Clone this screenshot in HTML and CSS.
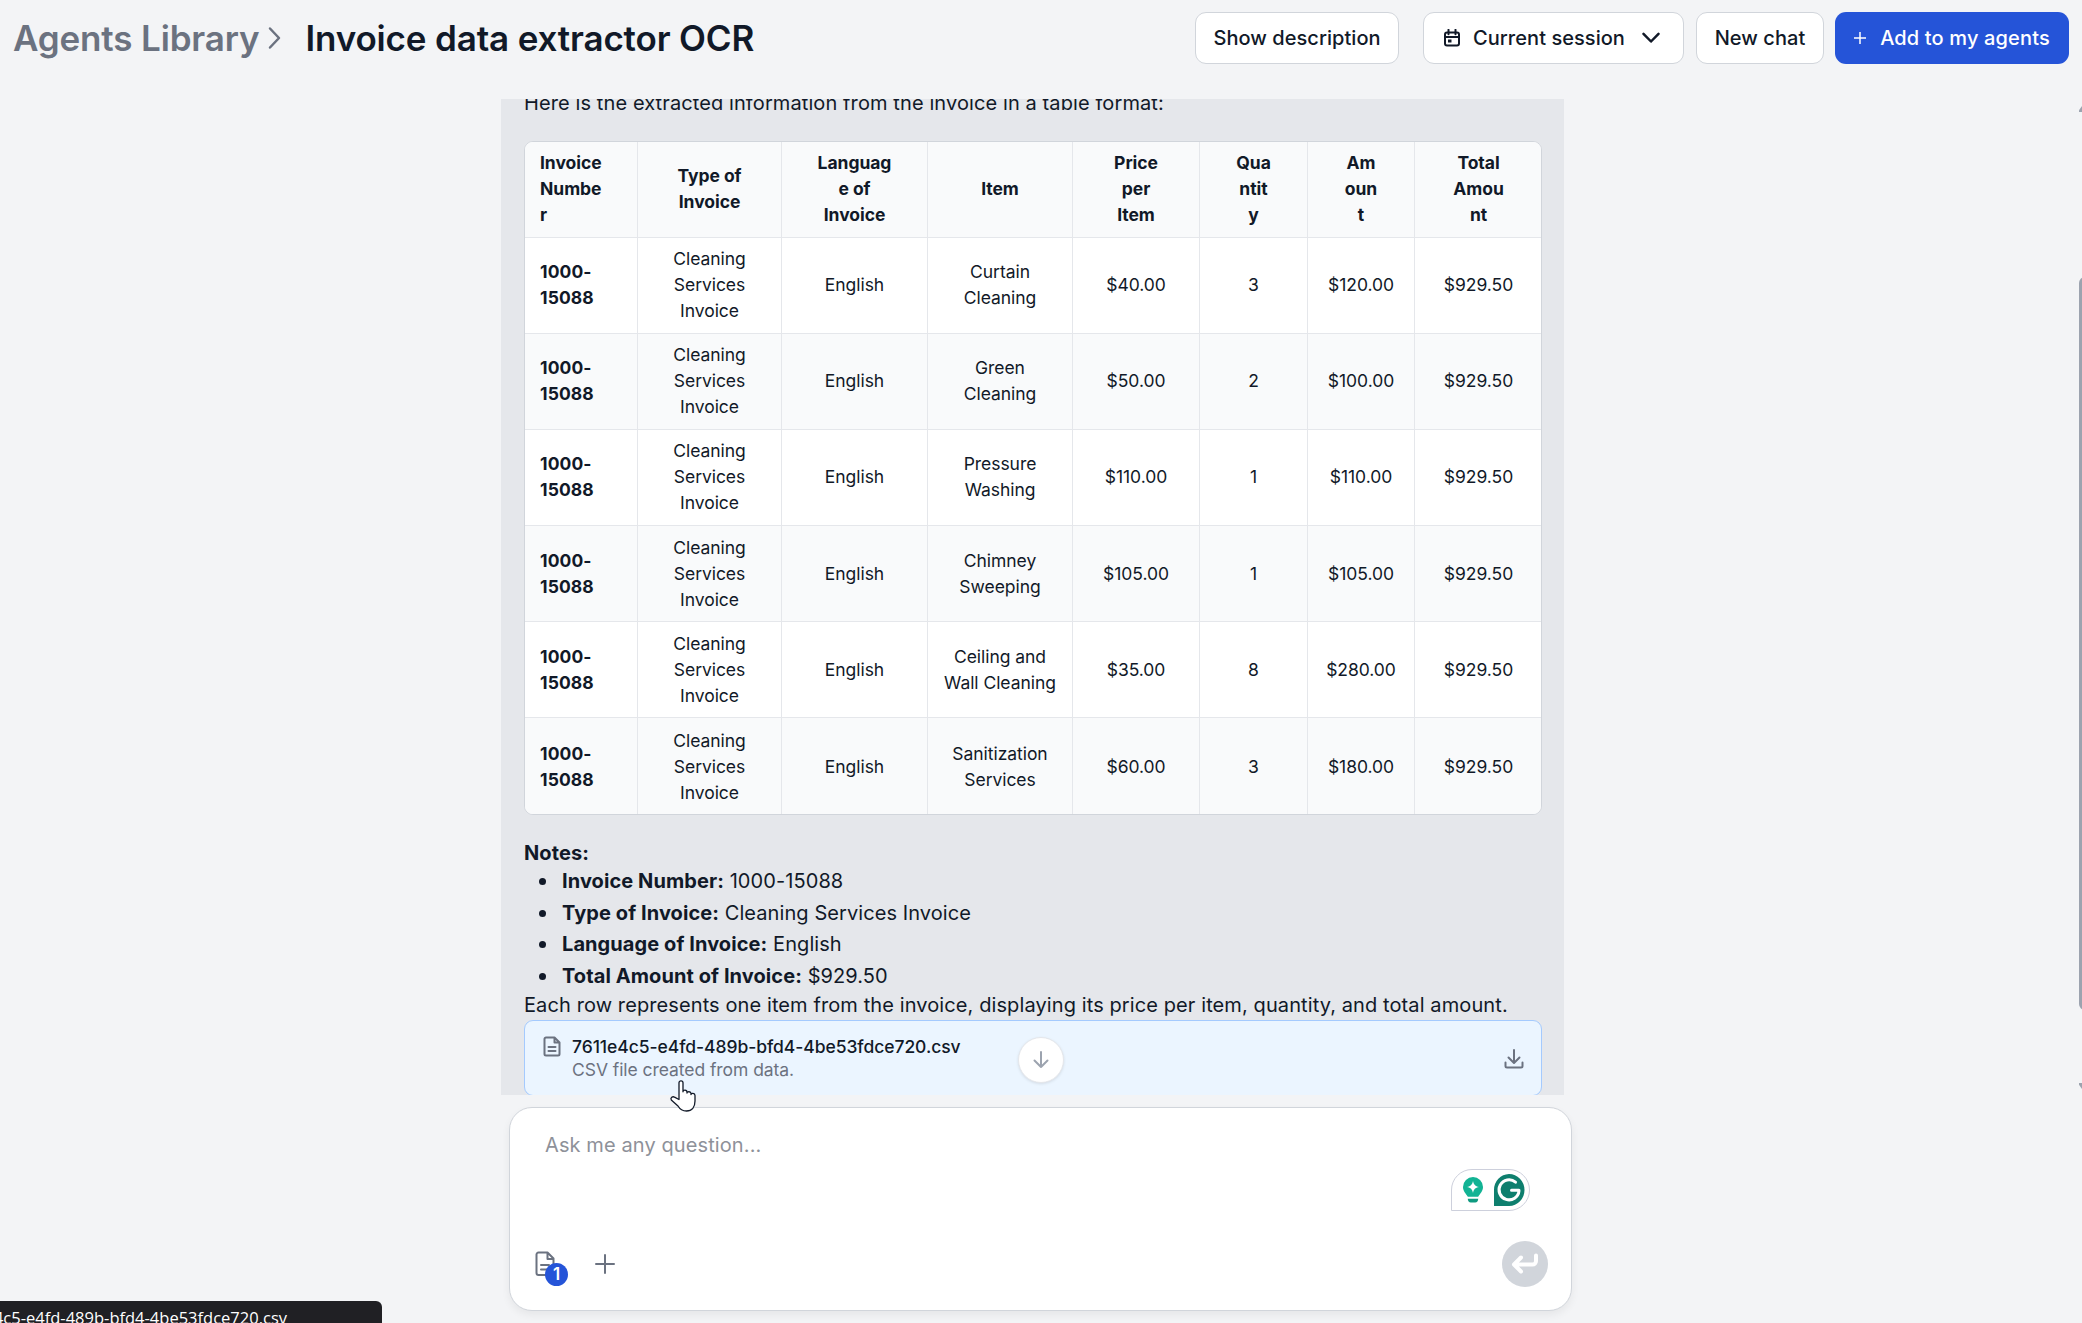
FILE: index.html
```
<html>
<head>
  <meta charset="utf-8">
  <title>Invoice data extractor OCR</title>
  <link rel="stylesheet" href="styles.css">
</head>
<body>
  <header class="topbar">
    <div class="crumbs">
      <a class="crumb-parent">Agents Library</a>
      <svg class="crumb-arrow" width="14" height="24" viewBox="0 0 14 24"><path d="M2 2.500l9 9.500L2 21.500"/></svg>
      <h1>Invoice data extractor OCR</h1>
    </div>
    <button class="btn btn-desc">Show description</button>
    <button class="btn btn-session">
      <svg width="18" height="18" viewBox="0 0 18 18"><rect x="2" y="3.500" width="14" height="13" rx="2"/><path d="M5.500 .8v4.400M12.500 .8v4.400M2 8h14"/><path class="solid" d="M5 10.500h3.500v3H5z"/></svg>
      <span>Current session</span>
      <svg width="18" height="18" viewBox="0 0 18 18"><path class="thick" d="M1.500 4.800L9 12.500l7.500-7.700"/></svg>
    </button>
    <button class="btn btn-new">New chat</button>
    <button class="btn btn-add">
      <svg width="12" height="12" viewBox="0 0 12 12"><path d="M6 0v12M0 6h12"/></svg>
      <span>Add to my agents</span>
    </button>
  </header>

  <main class="chat">
    <div class="message">
      <p>Here is the extracted information from the invoice in a table format:</p>
      <div class="table-wrap">
      <table>
        <colgroup>
          <col class="c-num"><col class="c-type"><col class="c-lang"><col class="c-item">
          <col class="c-price"><col class="c-qty"><col class="c-amount"><col class="c-total">
        </colgroup>
        <tr>
          <th>Invoice<br>Numbe<br>r</th><th>Type of<br>Invoice</th><th>Languag<br>e of<br>Invoice</th><th>Item</th>
          <th>Price<br>per<br>Item</th><th>Qua<br>ntit<br>y</th><th>Am<br>oun<br>t</th><th>Total<br>Amou<br>nt</th>
        </tr>
        <tr><td>1000-<br>15088</td><td>Cleaning<br>Services<br>Invoice</td><td>English</td><td>Curtain<br>Cleaning</td><td>$40.00</td><td>3</td><td>$120.00</td><td>$929.50</td></tr>
        <tr><td>1000-<br>15088</td><td>Cleaning<br>Services<br>Invoice</td><td>English</td><td>Green<br>Cleaning</td><td>$50.00</td><td>2</td><td>$100.00</td><td>$929.50</td></tr>
        <tr><td>1000-<br>15088</td><td>Cleaning<br>Services<br>Invoice</td><td>English</td><td>Pressure<br>Washing</td><td>$110.00</td><td>1</td><td>$110.00</td><td>$929.50</td></tr>
        <tr><td>1000-<br>15088</td><td>Cleaning<br>Services<br>Invoice</td><td>English</td><td>Chimney<br>Sweeping</td><td>$105.00</td><td>1</td><td>$105.00</td><td>$929.50</td></tr>
        <tr><td>1000-<br>15088</td><td>Cleaning<br>Services<br>Invoice</td><td>English</td><td>Ceiling and<br>Wall Cleaning</td><td>$35.00</td><td>8</td><td>$280.00</td><td>$929.50</td></tr>
        <tr><td>1000-<br>15088</td><td>Cleaning<br>Services<br>Invoice</td><td>English</td><td>Sanitization<br>Services</td><td>$60.00</td><td>3</td><td>$180.00</td><td>$929.50</td></tr>
      </table>
      </div>
      <p><b>Notes:</b></p>
      <ul>
        <li><b>Invoice Number:</b> 1000-15088</li>
        <li><b>Type of Invoice:</b> Cleaning Services Invoice</li>
        <li><b>Language of Invoice:</b> English</li>
        <li><b>Total Amount of Invoice:</b> $929.50</li>
      </ul>
      <p>Each row represents one item from the invoice, displaying its price per item, quantity, and total amount.</p>
      <div class="file">
        <svg class="file-icon" width="18" height="21" viewBox="0 0 18 21"><path d="M3 1.500h8.500l5 5V18a1.500 1.500 0 0 1-1.500 1.500H3A1.500 1.500 0 0 1 1.500 18V3A1.500 1.500 0 0 1 3 1.500zM11.500 1.500v5h5M5.500 11h7M5.500 15h7"/></svg>
        <div class="file-text">
          <div class="file-name">7611e4c5-e4fd-489b-bfd4-4be53fdce720.csv</div>
          <div class="file-sub">CSV file created from data.</div>
        </div>
        <svg class="file-download" width="20" height="20" viewBox="0 0 20 20"><path d="M10 1v12.500M4.500 8.500L10 14l5.500-5.500M1.500 13.500v3.500a1.500 1.500 0 0 0 1.500 1.500h14a1.500 1.500 0 0 0 1.500-1.500v-3.500"/></svg>
      </div>
    </div>
    <div class="scroll-down">
      <svg width="20" height="20" viewBox="0 0 20 20"><path d="M10 2v15M3.500 10.500L10 17l6.500-6.500"/></svg>
    </div>
  </main>

  <section class="composer">
    <div class="placeholder">Ask me any question...</div>
    <!-- grammarly -->
    <div class="assistant">
      <svg width="22" height="28" viewBox="0 0 22 28">
        <path fill="#12b394" d="M11 1a10 10 0 0 0-10 10c0 4.200 2.800 6.500 4.800 9.800h10.400c2-3.300 4.800-5.600 4.800-9.800A10 10 0 0 0 11 1z"/>
        <path fill="#fff" d="M11 5c.8 3.800 2.200 5.200 6 6-3.800.8-5.200 2.200-6 6-.8-3.800-2.200-5.200-6-6 3.800-.8 5.200-2.200 6-6z"/>
        <path fill="#0f9a80" d="M5.800 22.800h10.400c0 2.400-1.200 3.700-3 3.700H8.800c-1.800 0-3-1.300-3-3.700z"/>
      </svg>
      <svg width="32" height="32" viewBox="0 0 32 32">
        <path fill="#0e7f6e" d="M16 0a15.500 16 0 1 1 0 32H1V16A15.500 16 0 0 1 16 0z"/>
        <path class="ring" d="M22.500 8.200a10 10 0 1 0 3.500 8.600M26 16.300h-7.500"/>
      </svg>
    </div>
    <div class="composer-tools">
      <div class="attach">
        <svg width="22" height="26" viewBox="0 0 22 26"><path d="M3.500 1.500h9l6 6V22a2 2 0 0 1-2 2h-13a2 2 0 0 1-2-2V3.500a2 2 0 0 1 2-2zM12.500 1.500V8h6M6 14h8M6 18.500h8"/></svg>
        <span class="badge">1</span>
      </div>
      <svg class="plus" width="20" height="20" viewBox="0 0 20 20"><path d="M10 1v18M1 10h18"/></svg>
      <div class="send">
        <svg width="28" height="24" viewBox="0 0 28 24"><path d="M25 3.500v5.500a3.500 3.500 0 0 1-3.500 3.500H3.500M10 5.500l-7 7 7 7"/></svg>
      </div>
    </div>
  </section>

  <div class="scrollbar"><i class="up"></i><i class="thumb"></i><i class="down"></i></div>
  <div class="statusbar">7611e4c5-e4fd-489b-bfd4-4be53fdce720.csv</div>
  <svg class="cursor" width="28" height="34" viewBox="0 0 28 34"><path d="M10 20.500V3.800a2 2 0 0 1 4 0v9c0-2.400 4-2.200 4 .3v1c0-2 4-1.800 4 .5v1c0-1.800 4-1.700 4 .8V22c0 6-3 10-8.500 10-4 0-6.500-1.600-8.500-5L2.300 21c-1.300-2.300 1.500-4 3.200-2.800z"/></svg>
</body>
</html>
```
FILE: styles.css
```
* {
  box-sizing: border-box;
}
body {
  margin: 0;
  height: 1323px;
  position: relative;
  overflow: hidden;
  display: flex;
  flex-direction: column;
  background: #f3f4f6;
  color: #111928;
  font-family: Inter, "Liberation Sans", sans-serif;
  font-size: 20px;
  line-height: 30px;
}
svg {
  flex: none;
  fill: none;
  stroke: currentColor;
  stroke-width: 2;
  stroke-linecap: round;
  stroke-linejoin: round;
}
p, h1, ul {
  margin: 0;
}

/* header */
.topbar {
  flex: none;
  display: flex;
  align-items: center;
  height: 99px;
  padding: 0 13px 23px 13px;
}
.crumbs {
  display: flex;
  align-items: center;
  margin-right: auto;
  font-size: 35px;
  font-weight: 600;
  letter-spacing: -.15px;
}
.crumb-parent, .crumb-arrow {
  color: #6b7280;
}
.crumb-arrow {
  margin: 0 23px 0 9px;
  stroke-width: 2.5;
}
h1 {
  font-size: 35px;
  font-weight: 600;
}
.btn {
  display: flex;
  align-items: center;
  justify-content: center;
  height: 52px;
  padding: 0;
  border: 1.5px solid #d1d5db;
  border-radius: 11px;
  background: #fff;
  color: #111928;
  font: 500 20px/30px Inter, "Liberation Sans", sans-serif;
  letter-spacing: .05px;
}
.btn-desc {
  width: 204px;
  margin-right: 24px;
}
.btn-session {
  width: 261px;
  margin-right: 12px;
  padding-right: 4px;
}
.btn-session span {
  margin: 0 17px 0 12px;
}
.btn-session .solid {
  fill: currentColor;
  stroke: none;
}
.btn-session .thick {
  stroke-width: 2.5;
}
.btn-new {
  width: 128px;
  margin-right: 11px;
}
.btn-add {
  width: 234px;
  gap: 14px;
  border: 0;
  background: #2554d8;
  color: #fff;
}
.btn-add span {
  letter-spacing: .15px;
}
.btn-add svg {
  stroke-width: 1.5;
}

/* chat */
.chat {
  flex: none;
  position: relative;
  width: 1063px;
  height: 996px;
  margin-left: 501px;
  overflow: hidden;
  background: #e5e7eb;
}
.message {
  padding: 0 23px;
  margin-top: -11px;
}
.message > p {
  letter-spacing: .1px;
}
.table-wrap {
  width: 1018px;
  height: 674px;
  margin: 23px 0;
  overflow: hidden;
  border: 1px solid #d1d5db;
  border-radius: 9px;
  background: #fff;
}
table {
  width: 1017px;
  table-layout: fixed;
  border-collapse: separate;
  border-spacing: 0;
  font-size: 17.5px;
  line-height: 26px;
  letter-spacing: -.05px;
  text-align: center;
}
.c-num { width: 113px; }
.c-type { width: 144px; }
.c-lang { width: 146px; }
.c-item { width: 145px; }
.c-price { width: 127px; }
.c-qty { width: 108px; }
.c-amount { width: 107px; }
tr {
  height: 96.2px;
}
tr:first-child {
  height: 95.5px;
}
th, td {
  padding: 0;
  border-right: 1px solid #e5e7eb;
  border-bottom: 1px solid #e5e7eb;
}
th {
  padding-bottom: 1px;
  font-weight: 700;
}
th:first-child, td:first-child {
  padding-left: 15px;
  text-align: left;
  font-weight: 700;
}
td:first-child {
  letter-spacing: .1px;
}
th:last-child, td:last-child {
  border-right: 0;
}
tr:last-child td {
  border-bottom: 0;
}
tr:nth-child(odd) {
  background: #f9fafb;
}
ul {
  display: flex;
  flex-direction: column;
  gap: 1.7px;
  padding: 0;
  margin: -2px 0 -1px 38px;
  list-style: none;
  letter-spacing: .08px;
}
li {
  position: relative;
}
li::before {
  content: "";
  position: absolute;
  left: -23px;
  top: 12px;
  width: 7px;
  height: 7px;
  border-radius: 50%;
  background: #111928;
}
.file {
  display: flex;
  width: 1018px;
  height: 76px;
  padding: 14px 17px 0 18px;
  border: 1.5px solid #a4cafe;
  border-radius: 9px;
  background: #ebf5ff;
  color: #6b7280;
  font-size: 17.5px;
  line-height: 23px;
  letter-spacing: -.06px;
}
.file-icon {
  margin-top: 1px;
}
.file-text {
  margin-left: 11px;
  margin-right: auto;
}
.file-name {
  color: #111928;
  font-weight: 500;
}
.file-download {
  margin-top: 14px;
}
.scroll-down {
  position: absolute;
  left: 517px;
  top: 938px;
  display: flex;
  align-items: center;
  justify-content: center;
  width: 46px;
  height: 46px;
  border: 1px solid #e5e7eb;
  border-radius: 50%;
  background: #fff;
  color: #9ca3af;
  box-shadow: 0 1px 3px rgba(0, 0, 0, .1);
}

/* composer */
.composer {
  flex: none;
  position: relative;
  display: flex;
  flex-direction: column;
  justify-content: space-between;
  width: 1063px;
  height: 204px;
  margin: 12px 0 0 509px;
  padding: 22px 23px 23px 25px;
  border: 1px solid #d1d5db;
  border-radius: 23px;
  background: #fff;
  box-shadow: 0 4px 8px rgba(0, 0, 0, .06);
  color: #6b7280;
}
.placeholder {
  padding-left: 10px;
  color: #8e9199;
  letter-spacing: .1px;
}
.assistant {
  position: absolute;
  right: 41px;
  top: 61px;
  display: flex;
  align-items: center;
  gap: 9px;
  width: 79px;
  height: 42px;
  padding-left: 10px;
  border: 1px solid #cdd0dc;
  border-radius: 21px 21px 21px 0;
  background: #fff;
}
.assistant path {
  stroke: none;
}
.assistant .ring {
  stroke: #fff;
  stroke-width: 3;
}
.composer-tools {
  display: flex;
  align-items: center;
}
.attach {
  position: relative;
  height: 26px;
}
.attach svg {
  display: block;
}
.badge {
  position: absolute;
  left: 10px;
  top: 12px;
  width: 23px;
  height: 23px;
  border-radius: 50%;
  background: #2554d8;
  color: #fff;
  font-size: 17px;
  font-weight: 600;
  line-height: 23px;
  text-align: center;
}
.plus {
  margin-left: 38px;
}
.send {
  display: flex;
  align-items: center;
  justify-content: center;
  width: 46px;
  height: 46px;
  margin-left: auto;
  border-radius: 50%;
  background: #d1d5db;
  color: #fff;
}
.send svg {
  stroke-width: 4;
}

/* window edges */
.scrollbar {
  position: absolute;
  right: 0;
  top: 99px;
  width: 3px;
  height: 996px;
}
.scrollbar i {
  position: absolute;
  left: 0;
  width: 16px;
  background: #9ca3af;
}
.scrollbar .up {
  top: 7px;
  height: 6px;
  clip-path: polygon(0 70%, 3px 0, 100% 0, 100% 100%, 0 100%);
}
.scrollbar .thumb {
  top: 178px;
  height: 733px;
  border-radius: 6px;
}
.scrollbar .down {
  top: 984px;
  height: 6px;
  clip-path: polygon(0 0, 100% 0, 100% 100%, 3px 100%, 0 30%);
}
.statusbar {
  position: absolute;
  left: 0;
  top: 1301px;
  display: flex;
  justify-content: flex-end;
  width: 382px;
  height: 40px;
  padding: 5px 95px 0 0;
  border-radius: 0 6px 0 0;
  background: #202024;
  color: #fff;
  font: 16.5px/24px "Open Sans", "Noto Sans", sans-serif;
  white-space: nowrap;
}
.cursor {
  position: absolute;
  left: 669px;
  top: 1079px;
  stroke: #111928;
  stroke-width: 1.3;
  fill: #fff;
}
```
